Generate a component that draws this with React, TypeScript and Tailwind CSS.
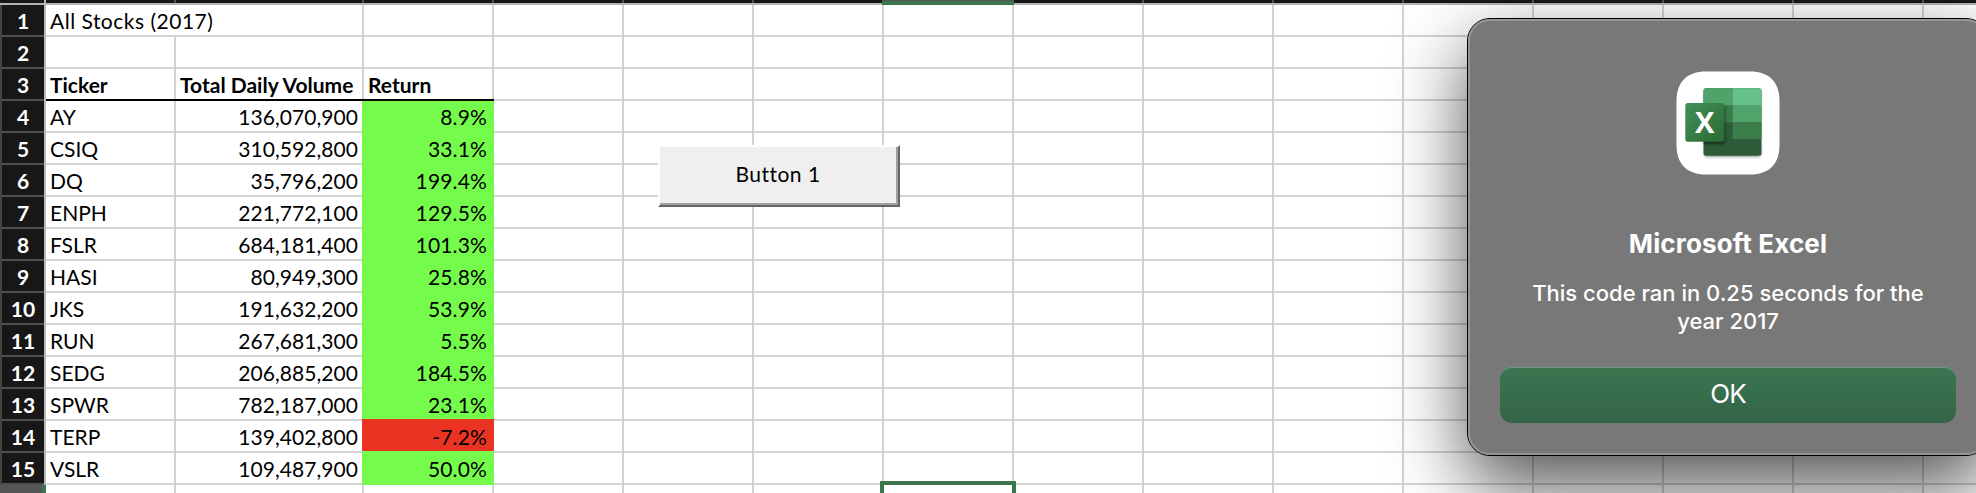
import React from "react";

const rows: [string, string, string][] = [
  ["All Stocks (2017)", "", ""],
  ["", "", ""],
  ["Ticker", "Total Daily Volume", "Return"],
  ["AY", "136,070,900", "8.9%"],
  ["CSIQ", "310,592,800", "33.1%"],
  ["DQ", "35,796,200", "199.4%"],
  ["ENPH", "221,772,100", "129.5%"],
  ["FSLR", "684,181,400", "101.3%"],
  ["HASI", "80,949,300", "25.8%"],
  ["JKS", "191,632,200", "53.9%"],
  ["RUN", "267,681,300", "5.5%"],
  ["SEDG", "206,885,200", "184.5%"],
  ["SPWR", "782,187,000", "23.1%"],
  ["TERP", "139,402,800", "-7.2%"],
  ["VSLR", "109,487,900", "50.0%"],
];

const emptyColumns = Array.from({ length: 12 }, (_, i) => i);

function ColumnHeaders() {
  return (
    <div className="flex h-[5px] border-b-2 border-[#b3b3b3] bg-[#171717]">
      <div className="w-[46px] shrink-0 border-r-2 border-[#b3b3b3]" />
      <div className="w-[130px] shrink-0 border-r-2 border-[#505050]" />
      <div className="w-[188px] shrink-0 border-r-2 border-[#505050]" />
      <div className="w-[130px] shrink-0 border-r-2 border-[#505050]" />
      {emptyColumns.map((c) => (
        <div key={c} className="w-[130px] shrink-0 border-r-2 border-[#505050]" />
      ))}
    </div>
  );
}

function Cell({ outer, inner, children }: { outer: string; inner: string; children?: React.ReactNode }) {
  return (
    <div className={`shrink-0 border-b-2 ${outer}`}>
      <div className={`flex h-full items-center leading-none whitespace-nowrap ${inner}`}>{children}</div>
    </div>
  );
}

function Row({ index, cells }: { index: number; cells: [string, string, string] }) {
  const heading = index === 3;
  const data = index > 3;
  const line = heading ? "border-black" : "border-[#d3d3d3]";
  const weight = heading ? "font-bold" : "";
  const fill = cells[2].startsWith("-") ? "bg-[#eb3323]" : "bg-[#75fb4c]";
  const overlap = index > 4 ? "-mt-0.5 pt-0.5" : "";
  return (
    <div className="flex h-8">
      <div className="flex w-[46px] shrink-0 border-r-2 border-[#b9b9b9] bg-[#171717]">
        <div className="w-0.5 bg-[#444444]" />
        <div className="flex grow items-center justify-center border-b-2 border-[#505050] pt-px text-[21px] leading-none font-bold text-white">
          {index}
        </div>
      </div>
      <Cell
        outer={`w-[130px] ${line}`}
        inner={`pl-1 ${weight} ${index === 1 ? "tracking-[0.5px]" : "border-r-2 border-[#d3d3d3]"}`}
      >
        {cells[0]}
      </Cell>
      {data ? (
        <Cell outer={`w-[186px] ${line}`} inner="justify-end pr-1 tracking-[0.05px]">
          {cells[1]}
        </Cell>
      ) : (
        <Cell outer={`w-[188px] ${line}`} inner={`border-r-2 border-[#d3d3d3] pl-1 ${weight}`}>
          {cells[1]}
        </Cell>
      )}
      {data ? (
        <div
          className={`flex w-[132px] shrink-0 items-center justify-end pr-[7px] leading-none tracking-[0.15px] ${overlap}`.concat(" ", fill)}
        >
          <span className="pb-0.5">{cells[2]}</span>
        </div>
      ) : (
        <Cell outer={`w-[130px] ${line}`} inner={`border-r-2 border-[#d3d3d3] pl-1 ${weight}`}>
          {cells[2]}
        </Cell>
      )}
      {emptyColumns.map((c) => (
        <div key={c} className="w-[130px] shrink-0 border-r-2 border-b-2 border-[#d3d3d3]" />
      ))}
    </div>
  );
}

function LastRow() {
  return (
    <div className="flex h-2">
      <div className="w-[46px] shrink-0 border-r-4 border-[#3c774b] bg-[#555555]" />
      <div className="w-[130px] shrink-0 border-r-2 border-[#d3d3d3]" />
      <div className="w-[188px] shrink-0 border-r-2 border-[#d3d3d3]" />
      <div className="w-[130px] shrink-0 border-r-2 border-[#d3d3d3]" />
      {emptyColumns.map((c) => (
        <div key={c} className="w-[130px] shrink-0 border-r-2 border-[#d3d3d3]" />
      ))}
    </div>
  );
}

function ExcelIcon() {
  return (
    <svg width="104" height="104" viewBox="0 0 104 104">
      <defs>
        <linearGradient id="badge" x1="0" y1="0" x2="1" y2="1">
          <stop offset="0" stopColor="#438f55" />
          <stop offset="1" stopColor="#2b6a34" />
        </linearGradient>
        <clipPath id="sheet">
          <rect x="27.5" y="17.3" width="58" height="67.5" rx="2.5" />
        </clipPath>
        <filter id="soft" x="-30%" y="-30%" width="160%" height="160%">
          <feGaussianBlur stdDeviation="1.5" />
        </filter>
      </defs>
      <path
        d="M30 .5H74C93 .5 103.5 11 103.5 30V74C103.5 93 93 103.5 74 103.5H30C11 103.5 .5 93 .5 74V30C.5 11 11 .5 30 .5Z"
        fill="#fff"
      />
      <rect x="28.500" y="21" width="56" height="65" rx="2.500" fill="#000" opacity=".4" filter="url(#soft)" />
      <g clipPath="url(#sheet)">
        <rect x="27" y="17" width="59" height="68" fill="#2d5b39" />
        <rect x="27" y="17" width="29.500" height="17.700" fill="#51a36c" />
        <rect x="56.500" y="17" width="30" height="17.700" fill="#65c189" />
        <rect x="27" y="34.700" width="29.500" height="16.800" fill="#3a7c4a" />
        <rect x="56.500" y="34.700" width="30" height="16.800" fill="#51a36c" />
        <rect x="56.500" y="51.500" width="30" height="16.500" fill="#3a7c4a" />
        <rect x="12" y="35" width="37" height="38" rx="2" fill="#000" opacity=".5" filter="url(#soft)" />
      </g>
      <rect x="9.300" y="32" width="39" height="38.700" rx="2.500" fill="url(#badge)" />
      <text x="28.700" y="61.800" textAnchor="middle" fill="#fff" fontFamily="Open Sans" fontWeight="700" fontSize="29">
        X
      </text>
    </svg>
  );
}

function Dialog() {
  return (
    <div className="absolute top-[18px] left-[1467px] h-[438px] w-[522px] rounded-[23px] border border-black bg-[#787878] shadow-[0_30px_75px_rgba(0,0,0,0.68)]">
      <div className="flex h-full flex-col items-center rounded-[22px] border-2 border-[#959595] font-[Inter,sans-serif] text-white">
        <div className="mt-[50px] h-[104px]">
          <ExcelIcon />
        </div>
        <h1 className="mt-[53px] text-[26px] leading-8 font-bold tracking-[0.15px] whitespace-nowrap">Microsoft Excel</h1>
        <p className="mt-[19px] text-center text-[22px] leading-7 font-medium whitespace-nowrap">
          This code ran in 0.25 seconds for the
          <br />
          year 2017
        </p>
        <button className="mt-[32px] h-14 w-[456px] rounded-[12px] border-t border-[#6b9b7d] bg-linear-to-b from-[#3b7650] to-[#336446] pb-[3px] text-[26px] leading-none tracking-[-0.8px]">
          OK
        </button>
      </div>
    </div>
  );
}

export default function App() {
  return (
    <div className="relative h-[493px] w-[1976px] overflow-hidden bg-white font-[Lato,sans-serif] text-[21px] text-black">
      <ColumnHeaders />
      {rows.map((cells, i) => (
        <Row key={i} index={i + 1} cells={cells} />
      ))}
      <LastRow />
      <div className="absolute top-0 left-[882px] h-[5px] w-[132px] border-t border-[#555555] bg-[#3c774b]" />
      <div className="absolute top-[481px] left-[880px] h-5 w-[136px] border-4 border-[#3c774b]" />
      <button className="absolute top-[145px] left-[658px] h-[62px] w-[242px] border-2 border-t-white border-r-[#666666] border-b-[#666666] border-l-white bg-[#efefef] text-[21px] leading-none tracking-[0.5px]">
        <span className="flex h-full items-center justify-center border-r-2 border-b-2 border-[#a0a0a0] pb-[3px]">Button 1</span>
      </button>
      <Dialog />
    </div>
  );
}
